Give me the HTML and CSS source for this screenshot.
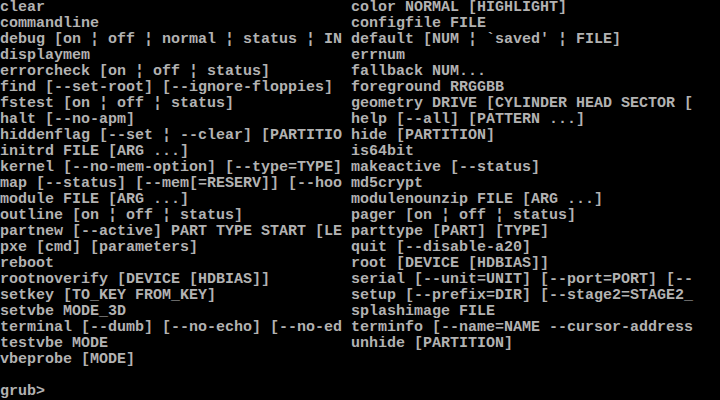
FILE: index.html
```html
<!DOCTYPE html>
<html>
<head>
<meta charset="utf-8">
<link rel="stylesheet" href="styles.css">
</head>
<body>
<main class="console">
  <div class="help">
    <div class="cell">clear</div><div class="cell">color NORMAL [HIGHLIGHT]</div>
    <div class="cell">commandline</div><div class="cell">configfile FILE</div>
    <div class="cell">debug [on ¦ off ¦ normal ¦ status ¦ IN</div><div class="cell">default [NUM ¦ `saved' ¦ FILE]</div>
    <div class="cell">displaymem</div><div class="cell">errnum</div>
    <div class="cell">errorcheck [on ¦ off ¦ status]</div><div class="cell">fallback NUM...</div>
    <div class="cell">find [--set-root] [--ignore-floppies]</div><div class="cell">foreground RRGGBB</div>
    <div class="cell">fstest [on ¦ off ¦ status]</div><div class="cell">geometry DRIVE [CYLINDER HEAD SECTOR [</div>
    <div class="cell">halt [--no-apm]</div><div class="cell">help [--all] [PATTERN ...]</div>
    <div class="cell">hiddenflag [--set ¦ --clear] [PARTITIO</div><div class="cell">hide [PARTITION]</div>
    <div class="cell">initrd FILE [ARG ...]</div><div class="cell">is64bit</div>
    <div class="cell">kernel [--no-mem-option] [--type=TYPE]</div><div class="cell">makeactive [--status]</div>
    <div class="cell">map [--status] [--mem[=RESERV]] [--hoo</div><div class="cell">md5crypt</div>
    <div class="cell">module FILE [ARG ...]</div><div class="cell">modulenounzip FILE [ARG ...]</div>
    <div class="cell">outline [on ¦ off ¦ status]</div><div class="cell">pager [on ¦ off ¦ status]</div>
    <div class="cell">partnew [--active] PART TYPE START [LE</div><div class="cell">parttype [PART] [TYPE]</div>
    <div class="cell">pxe [cmd] [parameters]</div><div class="cell">quit [--disable-a20]</div>
    <div class="cell">reboot</div><div class="cell">root [DEVICE [HDBIAS]]</div>
    <div class="cell">rootnoverify [DEVICE [HDBIAS]]</div><div class="cell">serial [--unit=UNIT] [--port=PORT] [--</div>
    <div class="cell">setkey [TO_KEY FROM_KEY]</div><div class="cell">setup [--prefix=DIR] [--stage2=STAGE2_</div>
    <div class="cell">setvbe MODE_3D</div><div class="cell">splashimage FILE</div>
    <div class="cell">terminal [--dumb] [--no-echo] [--no-ed</div><div class="cell">terminfo [--name=NAME --cursor-address</div>
    <div class="cell">testvbe MODE</div><div class="cell">unhide [PARTITION]</div>
    <div class="cell">vbeprobe [MODE]</div><div class="cell"></div>
  </div>
  <div class="prompt">grub&gt;</div>
</main>
</body>
</html>
```

FILE: styles.css
```css
html, body {
  margin: 0;
  padding: 0;
  background: #000;
}
body {
  width: 720px;
  height: 400px;
  overflow: hidden;
}
.console {
  font-family: "Liberation Mono", "DejaVu Sans Mono", monospace;
  font-size: 15px;
  font-weight: bold;
  line-height: 16px;
  color: #b2b2b2;
  display: flex;
  flex-direction: column;
  gap: 16px;
}
.help {
  display: grid;
  grid-template-columns: 351px 369px;
  grid-auto-rows: 16px;
}
.cell {
  white-space: pre;
  overflow: hidden;
}
.prompt {
  height: 16px;
  white-space: pre;
}
```
